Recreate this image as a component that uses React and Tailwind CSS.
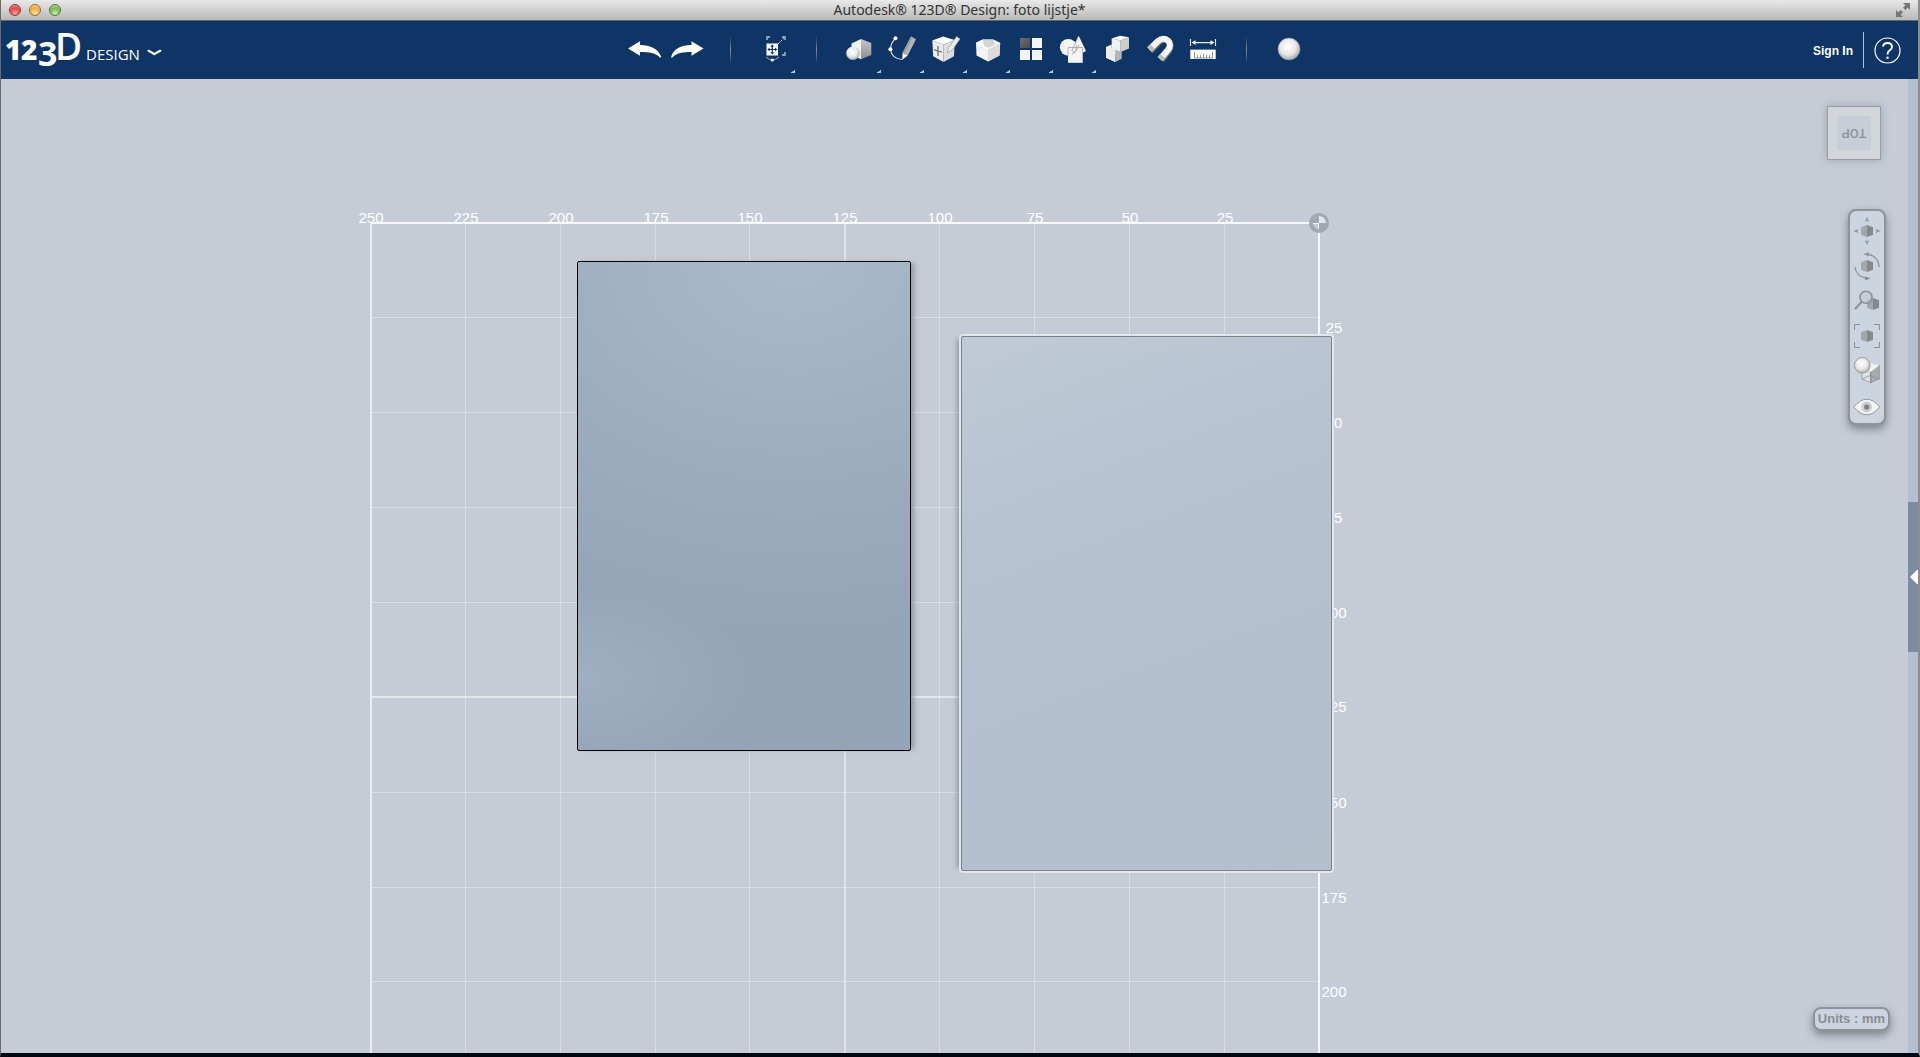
import React from "react";

const GRID_LEFT = 370;
const GRID_TOP = 144;
const GRID_RIGHT = 1318;

// Major lines are drawn heavier than the others
const columns = [
  { x: 370, label: "250", major: true },
  { x: 465, label: "225" },
  { x: 560, label: "200" },
  { x: 655, label: "175" },
  { x: 749, label: "150" },
  { x: 844, label: "125", major: true },
  { x: 939, label: "100" },
  { x: 1034, label: "75" },
  { x: 1129, label: "50" },
  { x: 1224, label: "25" },
  { x: 1318, label: "", major: true },
];

const rows = [
  { y: 144, label: "", major: true },
  { y: 239, label: "25" },
  { y: 334, label: "50" },
  { y: 429, label: "75" },
  { y: 524, label: "100" },
  { y: 618, label: "125", major: true },
  { y: 714, label: "150" },
  { y: 809, label: "175" },
  { y: 903, label: "200" },
];

const Defs = () => (
  <svg className="absolute h-0 w-0" aria-hidden="true">
    <defs>
      <radialGradient id="ball" cx="0.45" cy="0.4" r="0.6">
        <stop offset="0" stopColor="#ffffff" />
        <stop offset="0.6" stopColor="#e8e8e8" />
        <stop offset="1" stopColor="#a9a9a9" />
      </radialGradient>
      <linearGradient id="side" x1="0" y1="0" x2="0" y2="1">
        <stop offset="0" stopColor="#c4c4c4" />
        <stop offset="1" stopColor="#8f8f8f" />
      </linearGradient>
      <linearGradient id="dark" x1="0" y1="0" x2="1" y2="1">
        <stop offset="0" stopColor="#6e6e6e" />
        <stop offset="1" stopColor="#4a4a4a" />
      </linearGradient>
    </defs>
  </svg>
);

/* ---------- toolbar icons, each drawn on a 43x58 slot ---------- */

const UndoIcon = () => (
  <path d="M5 27.5 L17 20.3 V24 C27 24 36 28 38.3 36.5 L37 36.5 C33 32 26 31 17 31 V34.8 Z" fill="#fff" />
);

const RedoIcon = () => (
  <path d="M37.5 27.5 L25.5 20.3 V24 C15 24 7 28 5 36.5 L6.5 36.5 C10 32 17 31 25.5 31 V34.8 Z" fill="#fff" />
);

const TransformIcon = () => (
  <g fill="none">
    <path d="M15 19 V16 H18 M30 16 H33 V19 M33 31 V34 H30" stroke="#b9c4d2" strokeWidth="1.3" />
    <path d="M26 23 L32 17" stroke="#b9c4d2" strokeDasharray="2.5 1" />
    <rect x="14.5" y="22.5" width="11.5" height="12" fill="#fff" />
    <path d="M20.3 24.5 V32.5 M16.3 28.5 H24.3" stroke="#0e3566" strokeWidth="1.2" />
    <path d="M20.3 23.6 l-2 2.2 h4 Z M20.3 33.4 l-2 -2.2 h4 Z M15.4 28.5 l2.2 -2 v4 Z M25.2 28.5 l-2.2 -2 v4 Z" fill="#0e3566" />
    <path d="M14 36 Q20.3 42 27 36" stroke="#9fb0c4" />
    <circle cx="20.3" cy="39" r="1.6" fill="#fff" />
  </g>
);

const PrimitivesIcon = () => (
  <g>
    <path d="M13.5 22.5 L23 18 V38.3 L13.5 34 Z" fill="#f1f1f1" />
    <path d="M23 18 L33.3 22 V34 L23 38.3 Z" fill="url(#side)" />
    <circle cx="15" cy="32.3" r="6.8" fill="url(#ball)" />
  </g>
);

const SketchIcon = () => (
  <g>
    <path d="M14.5 17.5 Q9.5 22 9.5 28.3 Q10.5 38 21.5 38.5" fill="none" stroke="#d5dbe3" strokeWidth="1.1" />
    <path d="M30 15.5 L35 18.2 L26.7 34.5 L21.5 32 Z" fill="#b5b5b5" />
    <path d="M30 15.5 L32 16.5 L23.7 33 L21.5 32 Z" fill="#a0a0a0" />
    <path d="M21.5 32 L26.7 34.5 L21.3 38.8 Z" fill="#fff" />
    <circle cx="14.5" cy="17.3" r="2" fill="#fff" />
    <circle cx="9.4" cy="28.3" r="2" fill="#fff" />
  </g>
);

const ConstructIcon = () => (
  <g>
    <path d="M8.3 19.5 L19 15.6 L30.7 19 L19.5 23.7 Z" fill="#fff" />
    <path d="M8.3 19.5 L19.5 23.7 V41 L9.2 35.3 Z" fill="#ececec" />
    <path d="M19.5 23.7 L30.7 19 L30 35.3 L19.5 41 Z" fill="#dedede" />
    <path d="M14 25 V35 M10 28.8 L18 31.2" stroke="#777" strokeWidth="1.4" />
    <path d="M24.5 26.5 L32.7 15.5 L36 18 L28 29.5 L23.2 32 Z" fill="#ececec" stroke="#9a9a9a" strokeWidth="0.7" />
  </g>
);

const ModifyIcon = () => (
  <g>
    <path d="M9 21.7 L15.7 18.5 H26.3 L33.2 21.7 L32.5 34.5 L21 40.5 L9.5 34.5 Z" fill="#f3f3f3" />
    <path d="M21 29 L33.2 22 L32.5 34.5 L21 40.5 Z" fill="#dcdcdc" />
    <path d="M15.7 18.5 H26.3 L28 23.5 Q21 29 16.5 23.8 Z" fill="#d3d3d3" />
    <path d="M9 21.7 L15.7 18.5 L16.5 23.8 Q18 26.5 21 27 V29 Z" fill="#fff" />
  </g>
);

const PatternIcon = () => (
  <g>
    <rect x="10" y="17" width="10" height="10" fill="url(#dark)" />
    <rect x="22" y="17" width="10" height="10" fill="#f3f3f3" />
    <rect x="10" y="29" width="10" height="10" fill="#f3f3f3" />
    <rect x="22" y="29" width="10" height="10" fill="#f3f3f3" />
  </g>
);

const GroupingIcon = () => (
  <g fill="#f4f4f4">
    <circle cx="15.3" cy="26.3" r="8.4" />
    <path d="M25.7 14.7 L33 30 Q26 35 18.3 30 Z" />
    <rect x="15" y="26.5" width="14.7" height="15.3" />
    <path d="M15 34 V26.5 H29.7 V32 M23.5 24 Q24.5 30 19 33.5 M25.7 15 L19 29 Q19.5 32 22 31.5 L26 24" fill="none" stroke="#a9a9a9" strokeWidth="0.9" />
  </g>
);

const CombineIcon = () => (
  <g>
    <path d="M15.7 17.5 L24 14.7 L33 16.3 L24.7 19.5 Z" fill="#fff" />
    <path d="M15.7 17.5 L24.7 19.5 V31 L15.7 28 Z" fill="#f1f1f1" />
    <path d="M24.7 19.5 L33 16.3 V27.5 L24.7 31 Z" fill="#cdcdcd" />
    <path d="M10 26 L15.7 23.5 V28 L25.5 31 L19.3 33.5 L19.3 41 L10 36.8 Z" fill="#f6f6f6" />
    <path d="M10 26 L19.3 28.5 V41 L10 36.8 Z" fill="#ececec" />
    <path d="M19.3 28.7 L25.7 31 V37.8 L19.3 41 Z" fill="#b5b5b5" />
  </g>
);

const SnapIcon = () => (
  <g fill="none" strokeWidth="6.2">
    <path d="M11.5 30 L19 22 C26.5 14 36 22 29.5 30 L22.5 39" stroke="#7c7670" />
    <path d="M10.5 28.5 L18.5 20.5 C26 13.5 35 22 28.7 29.2 L21 38" stroke="#f7f7f7" />
    <path d="M10.5 28.5 L13.5 25.5 M21 38 L23.6 35" stroke="#bdbdbd" />
  </g>
);

const MeasureIcon = () => (
  <g>
    <path d="M8.5 18 V25 M33.5 18 V25 M11 21.6 H31" stroke="#e6ebf1" strokeWidth="1.1" />
    <path d="M9.5 21.6 l4 -2.3 v4.6 Z M32.5 21.6 l-4 -2.3 v4.6 Z" fill="#fff" />
    <rect x="8.3" y="28.6" width="25.4" height="9.4" fill="#fff" />
    <path d="M12.5 31 V37 M15.5 34 V37 M18.5 34 V37 M21.5 33 V37 M24.5 34 V37 M27.5 34 V37 M30.5 31 V37 M12 37 H31" stroke="#8a8a8a" strokeWidth="0.9" />
  </g>
);

const MaterialIcon = () => <circle cx="21" cy="28" r="11" fill="url(#ball)" stroke="#8d9199" strokeWidth="0.6" />;

const tools = [
  { name: "Undo", Icon: UndoIcon },
  { name: "Redo", Icon: RedoIcon },
  { divider: true },
  { name: "Transform", Icon: TransformIcon, menu: true },
  { divider: true },
  { name: "Primitives", Icon: PrimitivesIcon, menu: true },
  { name: "Sketch", Icon: SketchIcon, menu: true },
  { name: "Construct", Icon: ConstructIcon, menu: true },
  { name: "Modify", Icon: ModifyIcon, menu: true },
  { name: "Pattern", Icon: PatternIcon, menu: true },
  { name: "Grouping", Icon: GroupingIcon, menu: true },
  { name: "Combine", Icon: CombineIcon },
  { name: "Snap", Icon: SnapIcon },
  { name: "Measure", Icon: MeasureIcon },
  { divider: true },
  { name: "Material", Icon: MaterialIcon },
];

const ToolButton = ({ name, Icon, menu }) => (
  <button type="button" aria-label={name} className="h-[58px] w-[43px]">
    <svg width="43" height="58" viewBox="0 0 43 58" aria-hidden="true">
      <Icon />
      {menu && <path d="M43 49 V52 H39 V51 H40.5 V50 H42 V49 Z" fill="#c3c3c3" />}
    </svg>
  </button>
);

/* ---------- view navigation icons, 34x35 ---------- */

const Hex = ({ x = 17, y = 19 }) => (
  <g>
    <path d={`M${x} ${y - 6} l-6 2.2 v7.6 l6 2.2 Z`} fill="#a3a6aa" />
    <path d={`M${x} ${y - 6} l6 2.2 v7.6 l-6 2.2 Z`} fill="#85888c" />
  </g>
);

const PanIcon = () => (
  <g>
    <Hex />
    <path
      d="M17 5 l2 5 l-2 -1.2 l-2 1.2 Z M17 33 l2 -5 l-2 1.2 l-2 -1.2 Z M3.5 19 l5 -2 l-1.2 2 l1.2 2 Z M30.5 19 l-5 -2 l1.2 2 l-1.2 2 Z"
      fill="#8d9095"
    />
  </g>
);

const OrbitIcon = () => (
  <g>
    <Hex />
    <path d="M18 7.3 Q28.5 9 29.3 20 M5 19.7 Q6 29.5 16 31.2" fill="none" stroke="#8d9095" strokeWidth="1.2" />
    <path d="M13 7 l6 -1.8 v4 Z M21 31.3 l-6 -1.8 v4 Z" fill="#8d9095" />
  </g>
);

const ZoomIcon = () => (
  <g>
    <Hex x={23} y={22} />
    <circle cx="16" cy="15.3" r="6" fill="#c3cad4" fillOpacity="0.6" stroke="#8d8f92" strokeWidth="1.6" />
    <path d="M11.7 19.8 L5 27" stroke="#8d8f92" strokeWidth="2" />
  </g>
);

const FitIcon = () => (
  <g>
    <Hex />
    <path d="M4.5 13 V7.5 H10 M24 7.5 H29.5 V13 M29.5 25 V30.5 H24 M10 30.5 H4.5 V25" fill="none" stroke="#8d9095" />
  </g>
);

const VisualIcon = () => (
  <g>
    <path d="M12 16 L20.7 20 V30.7 L12 27 Z" fill="#dfe1e4" stroke="#8d9095" strokeWidth="0.7" />
    <path d="M20.7 20 L29.3 13.5 V27 L20.7 30.7 Z" fill="#a9acb1" stroke="#85888c" strokeWidth="0.7" />
    <path d="M20.7 20 L29.3 13.5 L20 11 L14 17 Z" fill="#f1f1f1" />
    <path d="M12 27 L20 23.5 L29.3 27 M20.7 20 V30" fill="none" stroke="#85888c" strokeWidth="0.7" />
    <circle cx="12.3" cy="13.3" r="7.8" fill="url(#ball)" stroke="#8d9095" strokeWidth="0.8" />
  </g>
);

const EyeIcon = () => (
  <g>
    <path d="M3.7 20 Q17 4.5 29.7 20 Q17 35.5 3.7 20 Z" fill="#f4f4f4" stroke="#96999d" />
    <circle cx="16.7" cy="20" r="5.4" fill="#cbcdd0" />
    <circle cx="16.7" cy="20" r="2.6" fill="#7f8183" />
  </g>
);

const viewTools = [
  { name: "Pan", Icon: PanIcon },
  { name: "Orbit", Icon: OrbitIcon },
  { name: "Zoom", Icon: ZoomIcon },
  { name: "Fit", Icon: FitIcon },
  { name: "Visual style", Icon: VisualIcon },
  { name: "Visibility", Icon: EyeIcon },
];

/* ---------- window chrome ---------- */

const TitleBar = () => (
  <header className="grid h-[21px] grid-cols-[1fr_auto_1fr] items-center border-b border-[#686660] bg-gradient-to-b from-[#e9e9e9] to-[#b9b9b9] px-2">
    <div className="flex gap-2">
      <button type="button" aria-label="Close" className="h-3 w-3 rounded-full border border-[#8e3a38] bg-[radial-gradient(circle_at_50%_85%,#ff9c9a,#e2484a_55%,#f4a5a5)]" />
      <button type="button" aria-label="Minimize" className="h-3 w-3 rounded-full border border-[#9a6a2c] bg-[radial-gradient(circle_at_50%_85%,#ffe39a,#efa941_55%,#fbdcae)]" />
      <button type="button" aria-label="Zoom window" className="h-3 w-3 rounded-full border border-[#4f7a3c] bg-[radial-gradient(circle_at_50%_85%,#c9f0a4,#78b658_55%,#c6e4b6)]" />
    </div>
    <h1 className="font-['Noto_Sans',sans-serif] text-[14px] leading-4 text-[#333]">
      Autodesk® 123D® Design: foto lijstje*
    </h1>
    <button type="button" aria-label="Full screen" className="justify-self-end">
      <svg width="14" height="14" viewBox="0 0 14 14" fill="#777" aria-hidden="true">
        <path d="M7 0 H14 V7 L11.7 4.7 L9.3 7 L7 4.7 L9.3 2.3 Z M7 14 H0 V7 L2.3 9.3 L4.7 7 L7 9.3 L4.7 11.7 Z" />
      </svg>
    </button>
  </header>
);

const Logo = () => (
  <svg width="170" height="58" viewBox="0 0 170 58" fill="#fff" aria-hidden="true" className="font-['Open_Sans',sans-serif]">
    <text fontSize="28" fontWeight="800" y="39">
      <tspan x="4">1</tspan>
      <tspan x="20">2</tspan>
    </text>
    <text fontSize="34" fontWeight="700" x="37" y="45">3</text>
    <text fontSize="37" fontWeight="600" x="54" y="39">D</text>
    <text fontSize="15" x="85" y="39">DESIGN</text>
    <path d="M147.5 29.8 Q150 31 153.3 33.2 Q156.5 31 159.3 29.8" fill="none" stroke="#fff" strokeWidth="2.2" strokeLinecap="round" strokeLinejoin="round" />
  </svg>
);

const Toolbar = () => (
  <div className="grid h-[58px] grid-cols-[1fr_auto_1fr] items-center bg-[#0e3566]">
    <button type="button" aria-label="123D Design menu" className="justify-self-start">
      <Logo />
    </button>
    <nav aria-label="Tools" className="flex pl-[15px]">
      {tools.map((tool, i) =>
        tool.divider ? (
          <div key={i} className="flex h-[58px] w-[43px] items-center justify-center">
            <div className="h-7 w-px bg-gradient-to-b from-transparent via-[#8f8c86] to-transparent" />
          </div>
        ) : (
          <ToolButton key={tool.name} {...tool} />
        )
      )}
    </nav>
    <div className="flex items-center gap-2.5 justify-self-end pr-[17px]">
      <a href="#signin" className="pt-px text-[12px] leading-4 font-bold text-white">
        Sign In
      </a>
      <div className="h-9 w-px bg-[#9ccbe6]" />
      <button type="button" aria-label="Help" className="h-[27px] w-[27px]">
        <svg width="27" height="27" viewBox="0 0 27 27" fill="none" stroke="#fff" aria-hidden="true">
          <circle cx="13.5" cy="13.5" r="12.5" strokeWidth="1.2" />
          <path d="M9 9.5 Q9.5 6 13.5 6 Q18 6 18 10 Q18 12 15.5 13.5 Q13.5 14.8 13.5 17.5" strokeWidth="1.9" />
          <path d="M13.5 19.7 V21.8" strokeWidth="2.2" />
        </svg>
      </button>
    </div>
  </div>
);

/* ---------- work plane ---------- */

const WorkPlane = () => (
  <svg className="absolute inset-0 h-full w-full" aria-label="Work plane">
    <svg x={GRID_LEFT - 1} y={GRID_TOP - 1} width={GRID_RIGHT - GRID_LEFT + 3} height="100%">
      {rows.map(({ y, major }) => (
        <rect key={y} x="1" y={y - GRID_TOP} width={GRID_RIGHT - GRID_LEFT} height={major ? 2 : 1} fill="#fff" fillOpacity={y === GRID_TOP ? 0.85 : major ? 0.5 : 0.33} />
      ))}
      {columns.map(({ x, major }) => (
        <rect key={x} x={x - GRID_LEFT} y="0" width={major ? 2 : 1} height="100%" fill="#fff" fillOpacity={x === GRID_RIGHT ? 0.85 : x === GRID_LEFT ? 0.65 : major ? 0.45 : 0.33} />
      ))}
    </svg>
    <circle cx="1318" cy="144" r="8" fill="none" stroke="#a0a8b1" strokeWidth="4" />
    <path d="M1318 144 V136 A8 8 0 0 0 1310 144 Z M1318 144 V152 A8 8 0 0 0 1326 144 Z" fill="#a0a8b1" />
    <path d="M1318 144 V137 A7 7 0 0 1 1325 144 Z" fill="#e3e7eb" />
    <g fill="#fff" fontSize="15" textAnchor="middle">
      {columns.map(({ x, label }) => (
        <text key={x} x={x} y="144">{label}</text>
      ))}
      {rows.map(({ y, label }) => (
        <text key={y} x="1333" y={y + 15}>{label}</text>
      ))}
    </g>
  </svg>
);

const ViewCube = () => (
  <button
    type="button"
    aria-label="View cube"
    className="flex h-[54px] w-[54px] items-center justify-center border border-[#989da3] bg-[#d2d5da] shadow-[0_0_8px_rgba(80,90,100,0.35)]"
  >
    <span className="flex h-[34px] w-[34px] rotate-180 items-center justify-center bg-[#c7ced7] font-['Roboto',sans-serif] text-[13px] leading-4 font-medium text-[#8d949c]">
      TOP
    </span>
  </button>
);

const ViewToolbar = () => (
  <nav
    aria-label="View"
    className="flex flex-col rounded-lg border-2 border-[#8f9297] bg-[#ccd4df] py-px shadow-[0_4px_8px_rgba(50,60,70,0.5)]"
  >
    {viewTools.map(({ name, Icon }) => (
      <button key={name} type="button" aria-label={name} className="h-[35px] w-[34px]">
        <svg width="34" height="35" viewBox="0 0 34 35" aria-hidden="true">
          <Icon />
        </svg>
      </button>
    ))}
  </nav>
);

const Workspace = () => (
  <main className="flex flex-1 bg-[#c5ccd6]">
    <div className="relative flex flex-1 flex-col items-end overflow-hidden">
      <WorkPlane />

      {/* Solids lying on the work plane */}
      <div className="absolute top-[182px] left-[576px] h-[490px] w-[334px] rounded-xs border border-black bg-[radial-gradient(ellipse_50%_20%_at_0%_85%,rgba(165,182,199,0.6),transparent),radial-gradient(ellipse_200%_100%_at_65%_0%,#a9bbcb,#9bacbd_45%,#95a5b8_75%)] shadow-[5px_0_5px_-2px_rgba(90,100,110,0.5)]" />
      <div className="absolute top-[257px] left-[960px] h-[535px] w-[371px] rounded-xs border border-[#7d8287] bg-[linear-gradient(160deg,#bfcad6,#b5c2cf_35%,#b4c0cf_60%,#b3c0cc)] shadow-[0_0_0_2px_#e3e7eb,-7px_0_5px_-3px_rgba(90,100,110,0.5)]" />

      {/* View controls */}
      <div className="relative flex flex-1 flex-col items-end">
        <div className="pt-[27px] pr-[27px]">
          <ViewCube />
        </div>
        <div className="pt-[49px] pr-[22px]">
          <ViewToolbar />
        </div>
        <div className="mt-auto pr-[18px] pb-[22px]">
          <button
            type="button"
            className="rounded-lg border-2 border-[#8f9297] bg-[#cdd3e0] px-[3px] py-0.5 text-[13px] leading-4 font-bold text-[#8a8d91] shadow-[0_4px_8px_rgba(50,60,70,0.5)]"
          >
            Units : mm
          </button>
        </div>
      </div>
    </div>

    {/* Side panel handle */}
    <aside className="w-2.5 bg-[#b3c0d1]">
      <button type="button" aria-label="Open panel" className="mt-[423px] flex h-[150px] w-full items-center justify-end bg-[#7b8c9e]">
        <svg width="8" height="14" viewBox="0 0 8 14" aria-hidden="true">
          <path d="M8 0 H7 L0 7 L7 14 H8 Z" fill="#fff" />
        </svg>
      </button>
    </aside>
  </main>
);

const App = () => (
  <div className="flex min-h-screen flex-col border-r-2 border-b-4 border-l border-r-[#8c8c8c] border-b-[#02060e] border-l-[#6b6b6b] font-['Liberation_Sans',Arial,sans-serif]">
    <Defs />
    <TitleBar />
    <Toolbar />
    <Workspace />
  </div>
);

export default App;
